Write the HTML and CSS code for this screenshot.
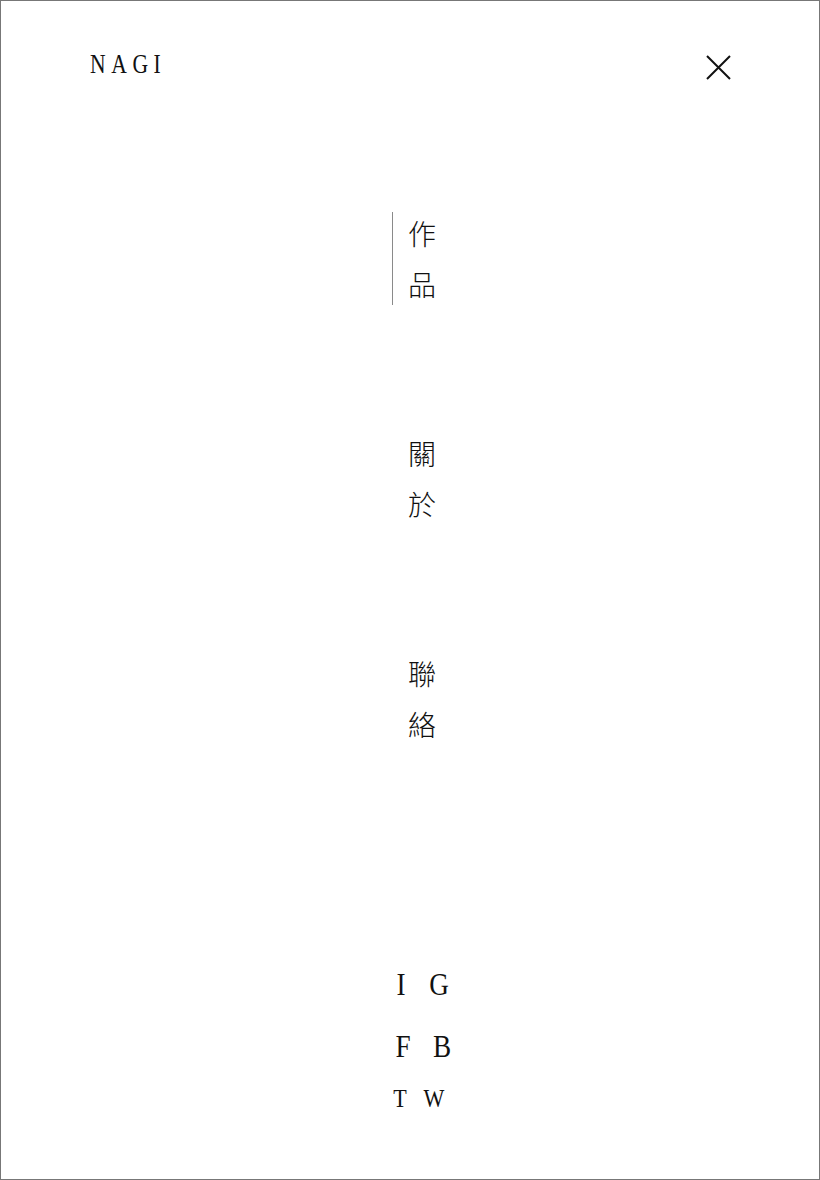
FILE: index.html
```html
<!DOCTYPE html>
<html lang="zh-Hant">
<head>
<meta charset="utf-8">
<title>NAGI</title>
<link rel="stylesheet" href="styles.css">
</head>
<body>
<div class="frame">
  <header class="top">
    <div class="logo"><span class="logo-text">NAGI</span></div>
    <button class="close" aria-label="close">
      <svg width="25" height="25" viewBox="0 0 25 25"><path d="M1 1L24 24M24 1L1 24" stroke="#111" stroke-width="2" fill="none"/></svg>
    </button>
  </header>
  <nav class="menu">
    <a class="item active" href="#"><i class="bar"></i><span class="chars"><span>作</span><span>品</span></span></a>
    <a class="item" href="#"><i class="bar"></i><span class="chars"><span>關</span><span>於</span></span></a>
    <a class="item" href="#"><i class="bar"></i><span class="chars"><span>聯</span><span>絡</span></span></a>
  </nav>
  <div class="social">
    <a class="s s1" href="#"><span>I</span><span>G</span></a>
    <a class="s s2" href="#"><span>F</span><span>B</span></a>
    <a class="s s3" href="#"><span>T</span><span>W</span></a>
  </div>
</div>
</body>
</html>
```
FILE: styles.css
```css
html, body { margin: 0; padding: 0; background: #fff; }
.frame {
  width: 820px; height: 1180px; box-sizing: border-box;
  border: 1px solid #777;
  font-family: "Liberation Serif", "Times New Roman", serif;
  color: #111;
}
.top {
  display: flex; justify-content: space-between; align-items: flex-start;
  padding: 48px 88px 0 89px;
  height: 80px; box-sizing: border-box;
}
.logo { font-size: 27px; line-height: 30px; }
.logo-text {
  display: inline-block; letter-spacing: 7px;
  transform: scaleX(0.8); transform-origin: 0 50%;
}
.close {
  display: block; background: none; border: 0; padding: 0;
  margin-top: 6px; cursor: pointer; line-height: 0;
}
.close svg { display: block; }
.menu {
  display: flex; flex-direction: column; align-items: flex-start;
  padding-left: 391px;
  margin-top: 127px; gap: 118px;
}
.item {
  display: flex; align-items: flex-start;
  color: #111; text-decoration: none;
}
.bar {
  display: block; width: 1px; height: 93px; margin-top: 4px;
  background: transparent;
}
.item.active .bar { background: #8a8a8a; }
.chars {
  display: flex; flex-direction: column; margin-left: 15px;
  font-family: "Noto Sans CJK TC", "Noto Sans CJK JP", serif;
  font-size: 28px; line-height: 51px; font-weight: 300;
}
.chars span { display: block; width: 28px; text-align: center; }
.social {
  display: flex; flex-direction: column; align-items: flex-start;
  padding-left: 380px;
  margin-top: 214px;
}
.s {
  display: flex; color: #111; text-decoration: none;
  line-height: 40px; height: 40px;
}
.s span {
  display: block; width: 38px; text-align: center;
  transform: scaleX(0.85);
}
.s1 { font-size: 32px; margin-left: 1px; }
.s2 { font-size: 32px; margin-top: 22px; margin-left: 3px; }
.s2 span:last-child { width: 40px; }
.s3 { font-size: 26px; margin-top: 13px; margin-left: 0; }
.s3 span:last-child { width: 30px; }
```
